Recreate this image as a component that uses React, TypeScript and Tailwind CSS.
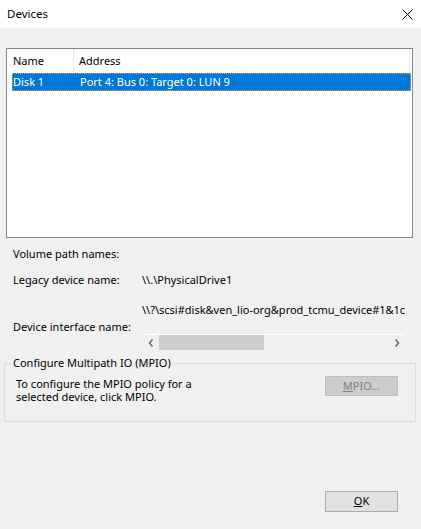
import React from "react";

const font = { fontFamily: '"Segoe UI", "Noto Sans", "Liberation Sans", sans-serif' };

function CloseIcon() {
  return (
    <svg width="11" height="11" viewBox="0 0 11 11" className="text-black">
      <path d="M0.5 0.5 L10.5 10.5 M10.5 0.5 L0.5 10.5" stroke="currentColor" strokeWidth="1" />
    </svg>
  );
}

function Chevron({ dir }: { dir: "left" | "right" }) {
  return (
    <svg width="6" height="8" viewBox="0 0 6 8" className="text-[#606060]">
      {dir === "left" ? (
        <path d="M4.5 0.5 L1.5 4 L4.5 7.5" stroke="currentColor" strokeWidth="1.4" fill="none" />
      ) : (
        <path d="M1.5 0.5 L4.5 4 L1.5 7.5" stroke="currentColor" strokeWidth="1.4" fill="none" />
      )}
    </svg>
  );
}

export default function App() {
  return (
    <div className="w-[421px] h-[529px] bg-[#f0f0f0] text-[11px] text-black flex flex-col" style={font}>
      {/* TITLE BAR */}
      <div className="h-[28px] bg-white flex items-center justify-between pl-[7px] pr-[8px]">
        <span className="text-[11.5px]">Devices</span>
        <CloseIcon />
      </div>

      {/* LIST */}
      <div className="mt-[20px] ml-[6px] w-[407px] h-[190px] border border-[#828790] bg-white flex flex-col">
        <div className="h-[24px] flex items-center">
          <div className="w-[67px] h-full flex items-center pl-[6px] border-r border-[#e5e5e5]">Name</div>
          <div className="flex-1 h-full flex items-center pl-[5px] mr-[2px] border-r border-[#e5e5e5]">Address</div>
        </div>
        <div className="ml-[5px] mr-[1px] h-[18px] bg-[#0078d7] text-white flex items-center border border-dotted border-[#e8a040]">
          <div className="w-[62px]">Disk 1</div>
          <div className="pl-[5px]">Port 4: Bus 0: Target 0: LUN 9</div>
        </div>
      </div>

      {/* PATH NAMES */}
      <div className="mt-[8px] ml-[13px] h-[16px] flex items-center">Volume path names:</div>
      <div className="mt-[10px] ml-[13px] h-[16px] flex items-center">
        <div className="w-[129px]">Legacy device name:</div>
        <div>\\.\PhysicalDrive1</div>
      </div>
      <div className="mt-[14px] ml-[13px] flex">
        <div className="w-[129px] shrink-0">
          <div className="mt-[17px] h-[16px] flex items-center">Device interface name:</div>
        </div>
        <div className="w-[263px] shrink-0 flex flex-col overflow-hidden">
          <div className="h-[16px] flex items-center overflow-hidden whitespace-nowrap">
            <span>\\?\scsi#disk&amp;ven_lio-org&amp;prod_tcmu_device#1&amp;1c12</span>
          </div>
          <div className="mt-[16px] h-[16px] border-t border-white flex items-center">
            <div className="w-[17px] flex justify-center"><Chevron dir="left" /></div>
            <div className="w-[105px] h-[15px] bg-[#cdcdcd]" />
            <div className="flex-1" />
            <div className="w-[17px] flex justify-center"><Chevron dir="right" /></div>
          </div>
        </div>
      </div>

      {/* MPIO GROUP */}
      <div className="relative mt-[13px] ml-[4px] w-[412px] h-[59px] border border-[#dcdcdc]">
        <span className="absolute left-[7px] top-[-9px] px-[1px] bg-[#f0f0f0] leading-[16px]">
          Configure Multipath IO (MPIO)
        </span>
        <div className="flex items-start justify-between pt-[12px] pl-[11px] pr-[17px]">
          <div className="leading-[13px] pt-[1px]">
            <div>To configure the MPIO policy for a</div>
            <div>selected device, click MPIO.</div>
          </div>
          <div className="w-[73px] h-[20px] bg-[#cccccc] border border-[#bfbfbf] text-[#838383] flex items-center justify-center">
            <span><u>M</u>PIO...</span>
          </div>
        </div>
      </div>

      {/* FOOTER */}
      <div className="mt-[69px] ml-[325px] w-[73px] h-[21px] bg-[#e1e1e1] border border-[#adadad] flex items-center justify-center">
        <span><u>O</u>K</span>
      </div>
    </div>
  );
}
